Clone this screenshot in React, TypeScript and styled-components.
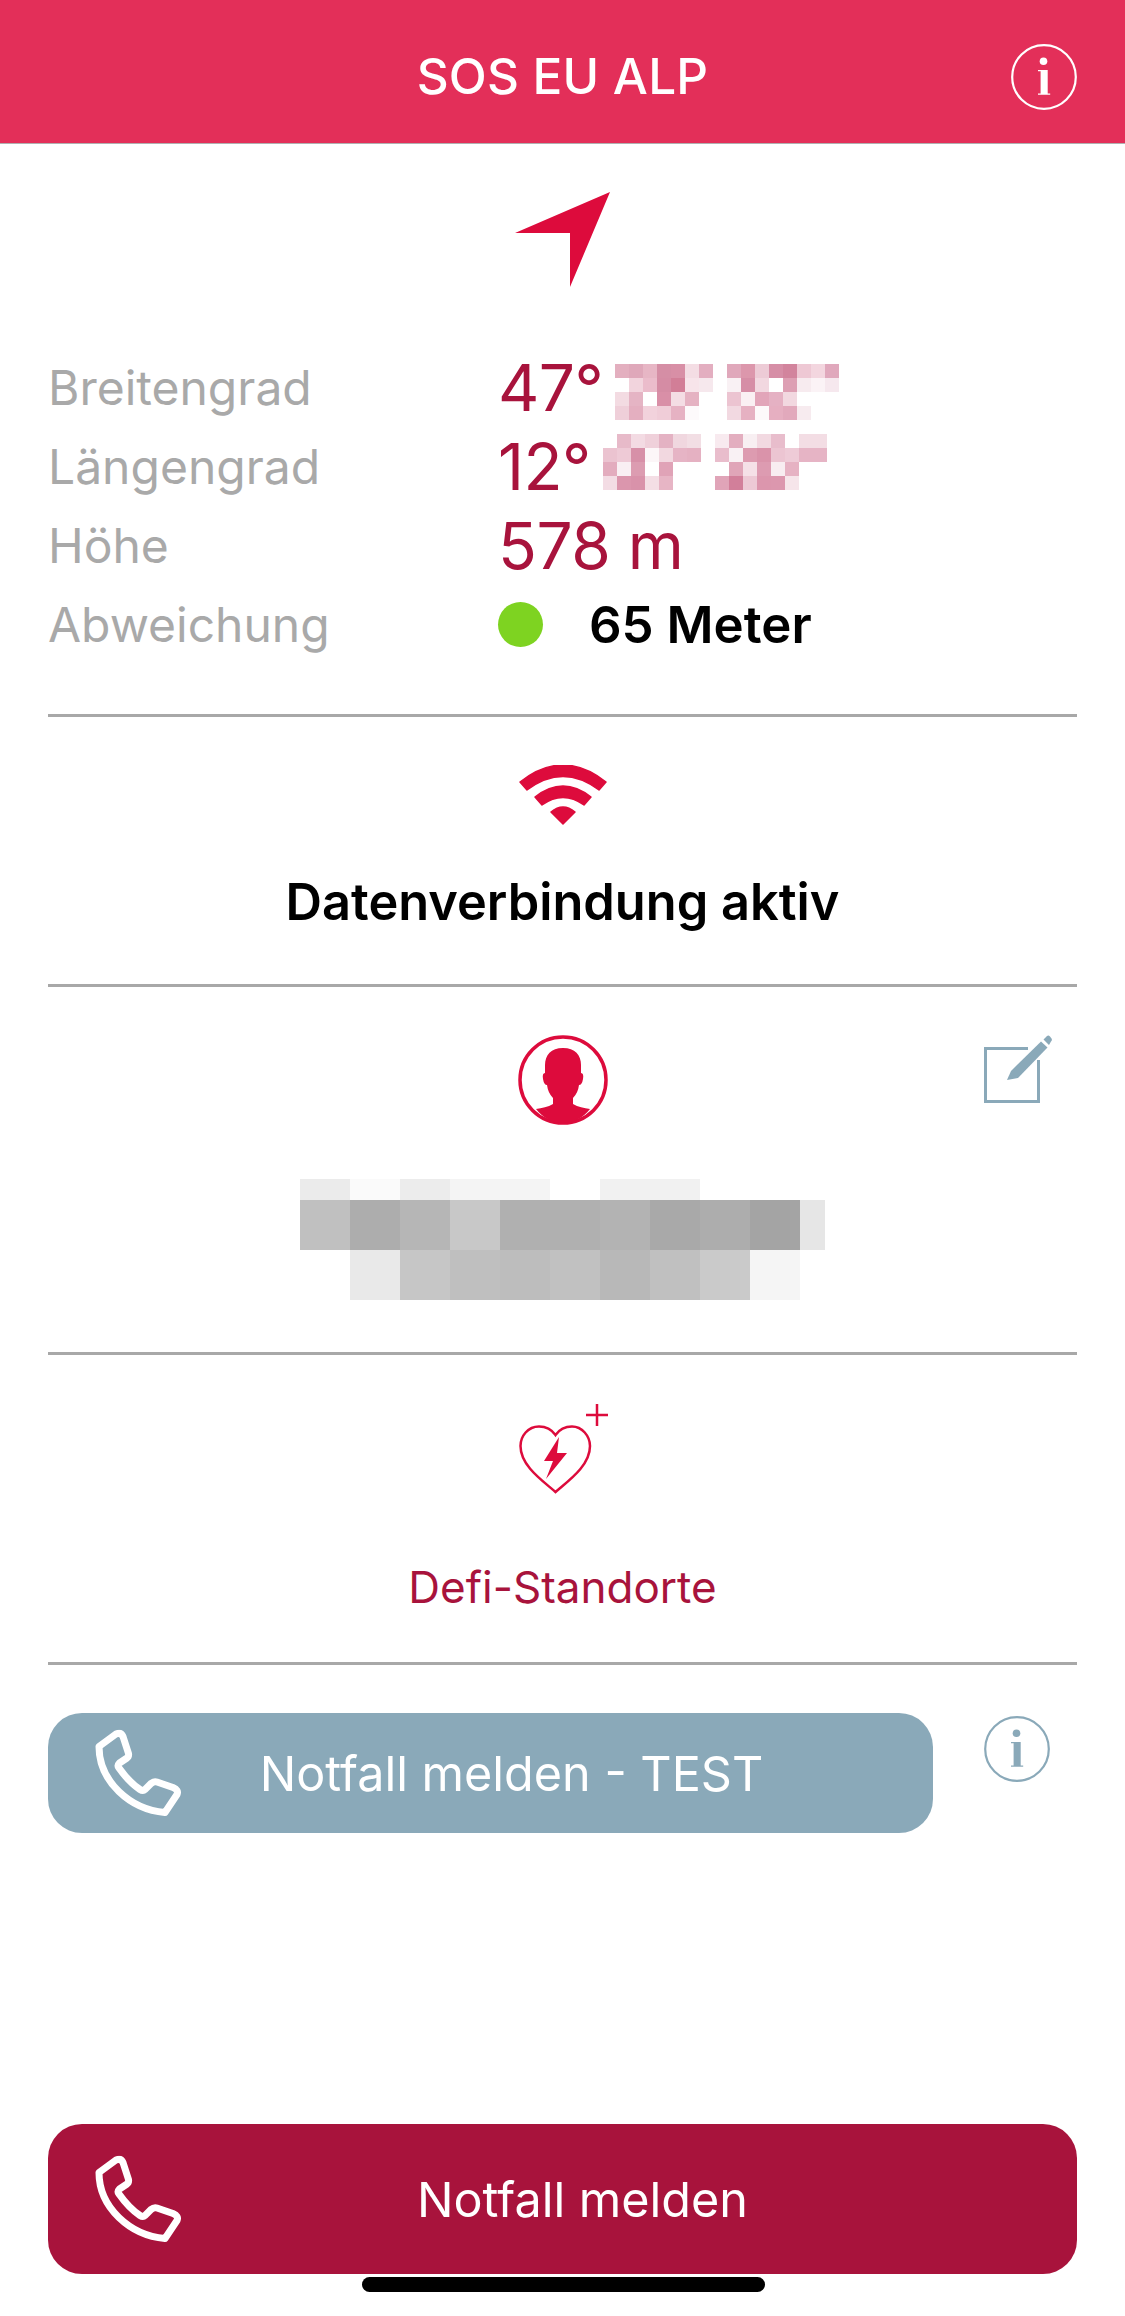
import React from "react";
import styled, { createGlobalStyle } from "styled-components";

const RED = "#dd0b3c";
const WINE = "#a8133c";
const STEEL = "#8aa9b9";
const _ = "";

const GlobalStyle = createGlobalStyle`
  html, body { margin: 0; padding: 0; background: #fff; }
  body { font-family: Inter, Roboto, "Liberation Sans", sans-serif; }
`;

const Page = styled.div`
  position: relative;
  width: 1125px;
  height: 2316px;
  display: flex;
  flex-direction: column;
  overflow: hidden;
  background: #fff;
`;

const Header = styled.header`
  position: relative;
  height: 144px;
  box-sizing: border-box;
  padding-top: 9px;
  display: flex;
  align-items: center;
  justify-content: center;
  background: #e32f59;
  border-bottom: 1px solid #b0b0b0;
`;

const Title = styled.h1`
  margin: 0;
  font-size: 49.5px;
  font-weight: 500;
  letter-spacing: 0.2px;
  color: #fff;
`;

const HeaderInfo = styled.div`
  position: absolute;
  right: 48px;
  top: 44px;
  display: flex;
`;

const Content = styled.main`
  flex: 1;
  display: flex;
  flex-direction: column;
  padding: 0 48px;
`;

const Section = styled.section<{ $height: number }>`
  position: relative;
  height: ${(p) => p.$height}px;
  display: flex;
  flex-direction: column;
  align-items: center;
  border-bottom: 3px solid #a8a8a8;
  box-sizing: border-box;
`;

const ArrowWrap = styled.div`
  margin-top: 48px;
  margin-bottom: 61px;
  display: flex;
`;

const DataRow = styled.div`
  align-self: stretch;
  height: 79px;
  display: flex;
  align-items: center;
`;

const Label = styled.span`
  width: 450px;
  font-size: 48px;
  color: #a9a9a9;
`;

const Value = styled.span`
  font-size: 64px;
  color: ${WINE};
  letter-spacing: -0.5px;
`;

const Dot = styled.span`
  width: 45px;
  height: 45px;
  border-radius: 50%;
  background: #7ed321;
  margin-right: 46px;
`;

const Strong = styled.span<{ $size: number }>`
  font-size: ${(p) => p.$size}px;
  font-weight: 600;
  color: #000;
`;

const IconSlot = styled.div<{ $top: number; $bottom: number }>`
  display: flex;
  margin-top: ${(p) => p.$top}px;
  margin-bottom: ${(p) => p.$bottom}px;
`;

const EditIcon = styled.div`
  position: absolute;
  right: 25px;
  top: 48px;
  display: flex;
`;

const DefiLabel = styled.span`
  font-size: 44px;
  color: ${WINE};
`;

const CallRow = styled.div`
  display: flex;
  align-items: flex-start;
  margin-top: 48px;
  justify-content: space-between;
  padding-right: 27px;
`;

const CallButton = styled.button<{ $bg: string; $width: number; $height: number; $shift: number }>`
  width: ${(p) => p.$width}px;
  height: ${(p) => p.$height}px;
  display: flex;
  align-items: center;
  justify-content: center;
  position: relative;
  padding: 0 0 0 ${(p) => p.$shift}px;
  border: 0;
  border-radius: 34px;
  background: ${(p) => p.$bg};
  color: #fff;
  font-family: inherit;
  font-size: 48.5px;
  font-weight: 400;
`;

const PhoneSlot = styled.span`
  position: absolute;
  left: 47px;
  top: 50%;
  transform: translateY(-50%);
  display: flex;
`;

const InfoSlot = styled.div`
  margin-top: 3px;
  display: flex;
`;

const Footer = styled.div`
  margin-top: auto;
  margin-bottom: 42px;
`;

const HomeBar = styled.div`
  position: absolute;
  left: 362px;
  bottom: 24px;
  width: 403px;
  height: 15px;
  border-radius: 8px;
  background: #000;
`;

const Mosaic: React.FC<{ rows: string[][]; cell: number; style?: React.CSSProperties }> = ({ rows, cell, style }) => (
  <svg
    width={rows[0].length * cell}
    height={rows.length * cell}
    shapeRendering="crispEdges"
    style={{ display: "block", flex: "none", ...style }}
  >
    {rows.map((r, y) =>
      r.map((c, x) => (c ? <rect key={`${x}-${y}`} x={x * cell} y={y * cell} width={cell} height={cell} fill={c} /> : null)),
    )}
  </svg>
);

const InfoIcon: React.FC<{ color: string; size: number }> = ({ color, size }) => (
  <svg width={size} height={size} viewBox="0 0 66 66" fill={color}>
    <circle cx="33" cy="33" r="31.8" fill="none" stroke={color} strokeWidth="2.2" />
    <circle cx="32.5" cy="17.3" r="3.8" />
    <path d="M27 26h9.7v23.6h2.5v1.2H27v-1.2h2.6V27.2H27z" />
  </svg>
);

const PhoneIcon: React.FC = () => (
  <svg width="87" height="87" viewBox="0 0 87 87" fill="none" stroke="#fff" strokeWidth="7" strokeLinejoin="round">
    <path d="M4 17 L21 4.5 Q26 2.5 28 7 L33.5 24 Q34 27 32 28.5 L24.5 33.5 Q22 36 24 38.5 C30 47 36 54 45 60 Q48 62 50 60 L56 54 Q59 51.5 62 52.5 L78 58 Q84 60.5 82 65 L70 83 C35 80 4 52 4 17 Z" />
  </svg>
);

const lat = [
  ["#e3afbf", "#dfa8ba", "#e7b6c5", "#d58ea5", "#d88fa6", "#f4dde4", "#e3aec0", _, "#e0a8bb", "#dc97ac", "#edcbd6", "#d68ea6", "#d2849d", "#eec8d4", "#f3d6df", "#e0a8bc"],
  [_, "#f2d4dd", "#ebbccb", "#d58ca4", "#d27e97", "#f7e4ea", "#f6e8ed", _, "#f9f1f4", "#d68ea6", "#f2d8e0", _, "#dd9fb3", "#f7ebef", "#fbf3f6", "#f6e8ee"],
  ["#f3dbe2", "#e5b4c4", _, "#d98fa7", "#f4dde4", "#e5b2c2", _, _, "#ecc4d1", "#faf0f3", "#e2a5b9", "#e5b1c3", "#f2d8e0", _, _, _],
  ["#efcfd9", "#e4afc0", "#f2d2dc", "#f0cdd8", "#e6b2c3", "#fdfafb", _, _, "#f2d9e1", "#e6b1c2", "#fdf9fa", "#e6afc1", "#e2a9bc", "#f7ebef", _, _],
];

const lng = [
  [_, "#e7bac9", "#f3dbe3", "#efd0da", "#e4b2c3", "#f0d7df", "#f2dee4", _, "#f8eaef", "#e3aebf", "#f8eff2", "#f2d9e1", "#e8bdcc", _, "#f3dde4", "#f3dde4"],
  ["#ebc3d0", "#eecad6", "#d790a8", "#fcf6f8", "#f2d8e0", "#e6b4c5", "#e5b1c2", _, "#e9bdcc", "#f9f1f4", "#dd9bb0", "#da93aa", "#ecc5d2", "#eecbd7", "#e6b4c5", "#e6b4c5"],
  ["#e3acbe", "#f9eff3", "#dc9cb1", _, "#e0a3b7", _, _, _, _, "#e0a5b8", "#f5e0e7", "#dd9bb1", "#f8edf1", "#e6b2c3", _, _],
  ["#f3dce4", "#db96ad", "#d992aa", "#f4dee5", "#e7b5c5", _, _, _, "#e0a4b8", "#d27f9a", "#edc9d5", "#dc96ad", "#dc97ae", "#f6e5ea", _, _],
];

const nameTop = ["#ebebeb", "#fafafa", "#ececec", "#f4f4f4", "#f4f4f4", _, "#f1f1f1", "#f1f1f1", _, _, _];
const nameMid = ["#c0c0c0", "#adadad", "#b6b6b6", "#c8c8c8", "#b0b0b0", "#b0b0b0", "#b3b3b3", "#a9a9a9", "#adadad", "#a4a4a4"];
const nameLow = [_, "#e9e9e9", "#c6c6c6", "#bfbfbf", "#bdbdbd", "#c1c1c1", "#b8b8b8", "#c0c0c0", "#cacaca", "#f5f5f5"];

const NameBlur: React.FC = () => (
  <svg width="525" height="121" shapeRendering="crispEdges" style={{ display: "block" }}>
    {nameTop.map((c, i) => (c ? <rect key={i} x={i * 50} y={0} width={50} height={21} fill={c} /> : null))}
    {nameMid.map((c, i) => (c ? <rect key={i} x={i * 50} y={21} width={50} height={50} fill={c} /> : null))}
    <rect x={500} y={21} width={25} height={50} fill="#e6e6e6" />
    {nameLow.map((c, i) => (c ? <rect key={i} x={i * 50} y={71} width={50} height={50} fill={c} /> : null))}
  </svg>
);

export default function App() {
  return (
    <Page>
      <GlobalStyle />
      <Header>
        <Title>SOS EU ALP</Title>
        <HeaderInfo>
          <InfoIcon color="#fff" size={66} />
        </HeaderInfo>
      </Header>
      <Content>
        <Section $height={573}>
          <ArrowWrap>
            <svg width="95" height="95" viewBox="0 0 95 95" fill={RED}>
              <path d="M95 0 L55 95 V41 H0 Z" />
            </svg>
          </ArrowWrap>
          <DataRow>
            <Label>Breitengrad</Label>
            <Value>47°</Value>
            <Mosaic rows={lat} cell={14} style={{ marginLeft: 12, marginTop: 9 }} />
          </DataRow>
          <DataRow>
            <Label>Längengrad</Label>
            <Value>12°</Value>
            <Mosaic rows={lng} cell={14} style={{ marginLeft: 12, marginBottom: 9 }} />
          </DataRow>
          <DataRow>
            <Label>Höhe</Label>
            <Value>578 m</Value>
          </DataRow>
          <DataRow>
            <Label>Abweichung</Label>
            <Dot />
            <Strong $size={51}>65 Meter</Strong>
          </DataRow>
        </Section>
        <Section $height={270}>
          <IconSlot $top={48} $bottom={46}>
            <svg width="88" height="60" viewBox="0 0 88 60" fill={RED} stroke={RED} strokeWidth="1.5" strokeLinejoin="round">
              <path d="M1 17 Q44 -17 87 17 L80 25 Q44 -2 8 25 Z" />
              <path d="M16 32 Q44 10 72 32 L65 40 Q44 25 23 40 Z" />
              <path d="M32 47 Q44 37 56 47 L44 59 Z" />
            </svg>
          </IconSlot>
          <Strong $size={50.5}>Datenverbindung aktiv</Strong>
        </Section>
        <Section $height={368}>
          <IconSlot $top={48} $bottom={54}>
            <svg width="90" height="90" viewBox="0 0 90 90" fill={RED}>
              <circle cx="45" cy="45" r="43" fill="none" stroke={RED} strokeWidth="3.5" />
              <path d="M45 13 C33 13 27 20 27 30 V38 Q24 38 25 44 Q26 50 29 50 Q30 58 35 63 V69 C30 72 24 73 18 74 C25 83 35 88 45 88 C55 88 65 83 72 74 C66 73 60 72 55 69 V63 Q60 58 61 50 Q64 50 65 44 Q66 38 63 38 V30 C63 20 57 13 45 13 Z" />
            </svg>
          </IconSlot>
          <NameBlur />
          <EditIcon>
            <svg width="68" height="68" viewBox="0 0 68 68" fill="none" stroke={STEEL}>
              <path d="M44 13.5 H1.5 V66.5 H54.5 V25" strokeWidth="3" />
              <path d="M27 36 L57 6.5 L63.5 12.5 L34 43 L23 45 Z" fill={STEEL} stroke="none" />
              <path d="M59.5 4.5 L63 1 Q64.5 0 66 1.5 L67.5 3.5 Q68.5 5 67 6.5 L65 10 Z" fill={STEEL} stroke="none" />
            </svg>
          </EditIcon>
        </Section>
        <Section $height={310}>
          <IconSlot $top={49} $bottom={66}>
            <svg width="90" height="90" viewBox="0 0 90 90" fill="none" stroke={RED}>
              <g transform="translate(1 0)">
                <path d="M36.5 88 C24 77 1.5 62 1.5 42 C1.5 32 9 22.5 20 22.5 C27 22.5 33 26 36.5 31 C40 26 46 22.5 53 22.5 C63 22.5 71 32 71 42 C71 62 49 77 36.5 88 Z" strokeWidth="2.5" />
                <path d="M40 33 L25 57 H34 L27 75 L48 49 H38 Z" fill={RED} stroke="none" />
              </g>
              <path d="M68 11 H90 M79 0 V22" strokeWidth="2.5" />
            </svg>
          </IconSlot>
          <DefiLabel>Defi-Standorte</DefiLabel>
        </Section>
        <CallRow>
          <CallButton $bg={STEEL} $width={885} $height={120} $shift={42}>
            <PhoneSlot>
              <PhoneIcon />
            </PhoneSlot>
            Notfall melden - TEST
          </CallButton>
          <InfoSlot>
            <InfoIcon color={STEEL} size={66} />
          </InfoSlot>
        </CallRow>
        <Footer>
          <CallButton $bg={WINE} $width={1029} $height={150} $shift={40}>
            <PhoneSlot>
              <PhoneIcon />
            </PhoneSlot>
            Notfall melden
          </CallButton>
        </Footer>
      </Content>
      <HomeBar />
    </Page>
  );
}
